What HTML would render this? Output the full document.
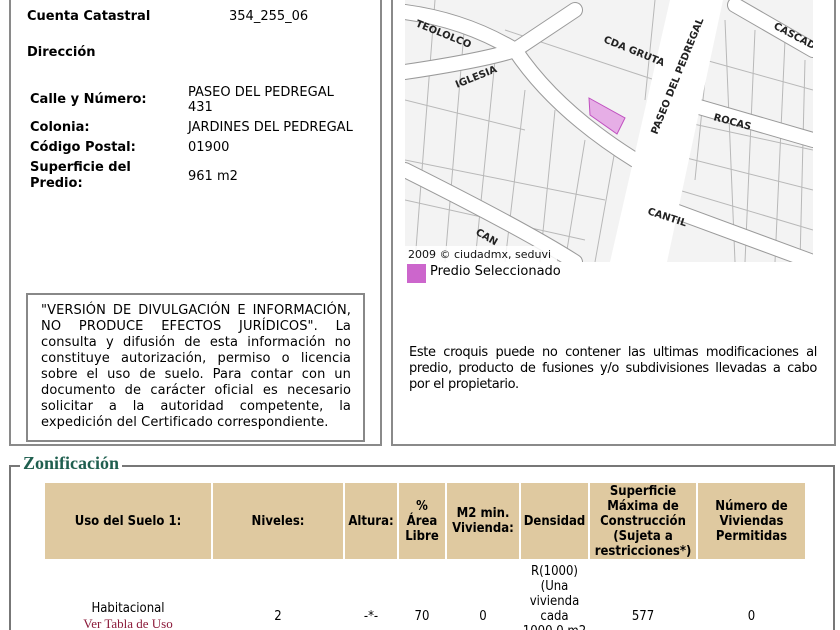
<!DOCTYPE html>
<html><head><meta charset="utf-8"><style>
html,body{margin:0;width:840px;height:630px;overflow:hidden}
body{background:#fff;font-family:"DejaVu Sans",Verdana,sans-serif;font-size:13px;color:#000}
#w{position:relative;width:840px;height:630px;overflow:hidden}
.a{position:absolute}
.b{font-weight:bold;font-size:13px}
.box{position:absolute;border:2px solid #8a8a8a;box-sizing:border-box}
.j{text-align:justify;line-height:16px}
table{border-collapse:separate;border-spacing:2px;font-family:"DejaVu Sans Condensed","Liberation Sans Narrow",sans-serif;font-size:13px}
th{background:#dfc9a0;font-weight:bold;text-align:center;padding:0;line-height:15px}
td{text-align:center;padding:0;line-height:15px}
</style></head><body><div id="w">
<div class="box" style="left:9px;top:-4px;width:373px;height:450px"></div>
<div class="box" style="left:391px;top:-4px;width:445px;height:450px"></div>
<div class="a b" style="left:27px;top:9px">Cuenta Catastral</div>
<div class="a" style="left:229px;top:9px">354_255_06</div>
<div class="a b" style="left:27px;top:45px">Dirección</div>
<div class="a b" style="left:30px;top:92px">Calle y Número:</div>
<div class="a" style="left:188px;top:85px;line-height:15px">PASEO DEL PEDREGAL<br>431</div>
<div class="a b" style="left:30px;top:120px">Colonia:</div>
<div class="a" style="left:188px;top:120px">JARDINES DEL PEDREGAL</div>
<div class="a b" style="left:30px;top:140px">Código Postal:</div>
<div class="a" style="left:188px;top:140px">01900</div>
<div class="a b" style="left:30px;top:160px;line-height:16px">Superficie del<br>Predio:</div>
<div class="a" style="left:188px;top:169px">961 m2</div>
<div class="box" style="left:26px;top:293px;width:339px;height:149px;border-color:#888"></div>
<div class="a j" style="left:41px;top:303px;width:310px;letter-spacing:0.1px">"VERSIÓN DE DIVULGACIÓN E INFORMACIÓN, NO PRODUCE EFECTOS JURÍDICOS". La consulta y difusión de esta información no constituye autorización, permiso o licencia sobre el uso de suelo. Para contar con un documento de carácter oficial es necesario solicitar a la autoridad competente, la expedición del Certificado correspondiente.</div>

<svg class="a" style="left:405px;top:0" width="408" height="262" viewBox="0 0 408 262">
<rect width="408" height="262" fill="#f3f3f3"/>
<g stroke="#b8b8b8" stroke-width="1" fill="none">
<path d="M30 0 L10 262 M60 20 L40 262 M90 60 L70 262 M120 90 L100 262 M150 110 L135 262 M180 140 L160 262 M210 150 L190 262 M250 0 L240 100 M280 0 L270 70 M300 80 L290 180 M320 20 L330 262 M350 30 L340 262 M380 40 L370 262 M400 60 L395 262 M260 120 L250 262 M0 100 L120 130 M0 160 L200 200 M0 200 L180 240 M100 30 L250 80 M240 180 L408 230 M250 150 L408 190 M270 120 L408 150 M300 60 L408 90"/>
</g>
<g stroke="#9a9a9a" stroke-width="16" fill="none" stroke-linecap="round">
<path d="M0 12 Q60 20 110 50 L170 10"/><path d="M0 72 Q80 60 110 50 Q150 110 230 160"/><path d="M0 170 Q120 230 170 262"/><path d="M330 5 L408 50"/><path d="M270 100 L408 140"/><path d="M240 200 L408 262"/>
</g>
<g stroke="#fff" stroke-width="14" fill="none" stroke-linecap="round">
<path d="M0 12 Q60 20 110 50 L170 10"/><path d="M0 72 Q80 60 110 50 Q150 110 230 160"/><path d="M0 170 Q120 230 170 262"/><path d="M330 5 L408 50"/><path d="M270 100 L408 140"/><path d="M240 200 L408 262"/>
</g>
<path d="M205 262 L265 0 L318 0 L262 262Z" fill="#fff"/>
<path d="M184 98 L220 118 L212 134 L185 115Z" fill="#e6aee6" stroke="#c050c0"/>
<g font-family="DejaVu Sans" font-size="10" font-weight="bold" fill="#222">
<text transform="translate(10 26) rotate(22)">TEOLOLCO</text>
<text transform="translate(52 88) rotate(-22)">IGLESIA</text>
<text transform="translate(198 42) rotate(22)">CDA GRUTA</text>
<text transform="translate(252 135) rotate(-68)">PASEO DEL PEDREGAL</text>
<text transform="translate(368 28) rotate(28)">CASCADA</text>
<text transform="translate(308 120) rotate(15)">ROCAS</text>
<text transform="translate(242 214) rotate(18)">CANTIL</text>
<text transform="translate(70 234) rotate(30)">CAN</text>
</g>
<rect x="0" y="246" width="152" height="16" fill="#fff" opacity=".85"/>
<text x="3" y="258" font-family="DejaVu Sans" font-size="11" fill="#111">2009 © ciudadmx, seduvi</text>
</svg>
<div class="a" style="left:407px;top:264px;width:19px;height:19px;background:#cc66cc"></div>
<div class="a" style="left:430px;top:264px;font-size:13px">Predio Seleccionado</div>
<div class="a j" style="left:409px;top:345px;width:408px;letter-spacing:-0.35px">Este croquis puede no contener las ultimas modificaciones al predio, producto de fusiones y/o subdivisiones llevadas a cabo por el propietario.</div>

<div class="box" style="left:9px;top:465px;width:826px;height:200px;border-width:2px 2px 0 2px;border-color:#777"></div>
<div class="a" style="left:20px;top:453px;background:#fff;padding:0 3px;font-family:'Liberation Serif',serif;font-weight:bold;font-size:18px;color:#1f5f4f">Zonificación</div>
<table class="a" style="left:43px;top:481px;width:764px">
<tr style="height:76px"><th style="width:166px">Uso del Suelo 1:</th><th style="width:130px">Niveles:</th><th style="width:52px">Altura:</th><th style="width:46px">%<br>Área<br>Libre</th><th style="width:72px">M2 min.<br>Vivienda:</th><th style="width:67px">Densidad</th><th style="width:106px">Superficie Máxima de Construcción (Sujeta a restricciones*)</th><th>Número de Viviendas Permitidas</th></tr>
<tr style="height:110px"><td>Habitacional<br><span style="font-family:'Liberation Serif',serif;color:#8b1a3a">Ver Tabla de Uso</span></td><td>2</td><td>-*-</td><td>70</td><td>0</td><td>R(1000)<br>(Una<br>vivienda<br>cada<br>1000.0 m2<br>de<br>terreno)</td><td>577</td><td>0</td></tr>
</table>
</div></body></html>
